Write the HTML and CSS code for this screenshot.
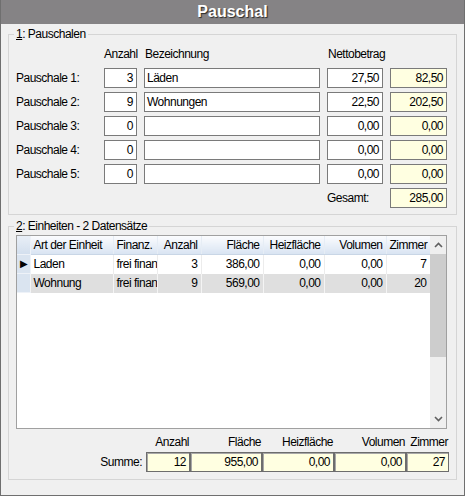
FILE: index.html
```html
<!DOCTYPE html>
<html lang="de">
<head>
    <meta charset="UTF-8">
    <meta name="viewport" content="width=device-width, initial-scale=1.0">
    <title>Pauschal</title>
    <link rel="stylesheet" href="styles.css">
</head>
<body>
    <div class="window">
        <div class="titlebar">Pauschal</div>

        <div class="window-body">
            <!-- Pauschalen -->
            <fieldset class="group group-flat">
                <legend><u>1</u>: Pauschalen</legend>
                <div class="flat-grid">
                    <div></div>
                    <div class="hdr right">Anzahl</div>
                    <div class="hdr">Bezeichnung</div>
                    <div class="hdr">Nettobetrag</div>
                    <div></div>

                    <div class="lbl">Pauschale 1:</div>
                    <div class="field num">3</div>
                    <div class="field">Läden</div>
                    <div class="field num">27,50</div>
                    <div class="field num calc">82,50</div>

                    <div class="lbl">Pauschale 2:</div>
                    <div class="field num">9</div>
                    <div class="field">Wohnungen</div>
                    <div class="field num">22,50</div>
                    <div class="field num calc">202,50</div>

                    <div class="lbl">Pauschale 3:</div>
                    <div class="field num">0</div>
                    <div class="field"></div>
                    <div class="field num">0,00</div>
                    <div class="field num calc">0,00</div>

                    <div class="lbl">Pauschale 4:</div>
                    <div class="field num">0</div>
                    <div class="field"></div>
                    <div class="field num">0,00</div>
                    <div class="field num calc">0,00</div>

                    <div class="lbl">Pauschale 5:</div>
                    <div class="field num">0</div>
                    <div class="field"></div>
                    <div class="field num">0,00</div>
                    <div class="field num calc">0,00</div>

                    <div></div>
                    <div></div>
                    <div></div>
                    <div class="lbl">Gesamt:</div>
                    <div class="field num calc">285,00</div>
                </div>
            </fieldset>

            <!-- Einheiten -->
            <fieldset class="group group-units">
                <legend><u>2</u>: Einheiten - 2 Datensätze</legend>
                <div class="grid-box">
                    <div class="grid-view">
                        <table class="units">
                            <colgroup>
                                <col style="width:13px">
                                <col style="width:83px">
                                <col style="width:44px">
                                <col style="width:44px">
                                <col style="width:62px">
                                <col style="width:61px">
                                <col style="width:62px">
                                <col style="width:44px">
                            </colgroup>
                            <thead>
                                <tr>
                                    <th class="ind"></th>
                                    <th>Art der Einheit</th>
                                    <th>Finanz.</th>
                                    <th class="right">Anzahl</th>
                                    <th class="right">Fläche</th>
                                    <th class="right">Heizfläche</th>
                                    <th class="right">Volumen</th>
                                    <th class="right">Zimmer</th>
                                </tr>
                            </thead>
                            <tbody>
                                <tr>
                                    <td class="ind"><span class="pointer">&#9654;</span></td>
                                    <td>Laden</td>
                                    <td>frei finanziert</td>
                                    <td class="right">3</td>
                                    <td class="right">386,00</td>
                                    <td class="right">0,00</td>
                                    <td class="right">0,00</td>
                                    <td class="right">7</td>
                                </tr>
                                <tr class="alt">
                                    <td class="ind"></td>
                                    <td>Wohnung</td>
                                    <td>frei finanziert</td>
                                    <td class="right">9</td>
                                    <td class="right">569,00</td>
                                    <td class="right">0,00</td>
                                    <td class="right">0,00</td>
                                    <td class="right">20</td>
                                </tr>
                            </tbody>
                        </table>
                    </div>
                    <div class="scrollbar">
                        <div class="sb-btn">
                            <svg width="9" height="6" viewBox="0 0 9 6"><polyline points="1,5 4.5,1.5 8,5" fill="none" stroke="#606060" stroke-width="1.6"/></svg>
                        </div>
                        <div class="sb-thumb"></div>
                        <div class="sb-track"></div>
                        <div class="sb-btn">
                            <svg width="9" height="6" viewBox="0 0 9 6"><polyline points="1,1 4.5,4.5 8,1" fill="none" stroke="#606060" stroke-width="1.6"/></svg>
                        </div>
                    </div>
                </div>

                <div class="sum-row">
                    <div></div>
                    <div class="sum-hdr">Anzahl</div>
                    <div class="sum-hdr">Fläche</div>
                    <div class="sum-hdr">Heizfläche</div>
                    <div class="sum-hdr">Volumen</div>
                    <div class="sum-hdr">Zimmer</div>

                    <div class="sum-lbl">Summe:</div>
                    <div class="field num calc sum">12</div>
                    <div class="field num calc sum">955,00</div>
                    <div class="field num calc sum">0,00</div>
                    <div class="field num calc sum">0,00</div>
                    <div class="field num calc sum">27</div>
                </div>
            </fieldset>
        </div>
    </div>
</body>
</html>
```

FILE: styles.css
```css
body {
    margin: 0;
    padding: 0;
    background: #f0f0f0;
    font-family: "Liberation Sans", Arial, sans-serif;
    font-size: 12px;
    letter-spacing: -0.5px;
    color: #000;
}
.window {
    width: 465px;
    height: 496px;
    box-sizing: border-box;
    border: 1px solid #6f6f6f;
    border-top: none;
    background: #f0f0f0;
    overflow: hidden;
}
.titlebar {
    height: 24px;
    line-height: 24px;
    background: #858385;
    color: #fff;
    font-size: 16px;
    font-weight: bold;
    letter-spacing: 0;
    text-align: center;
    text-shadow: 1px 1px 1px #2a2a2a;
}
.window-body {
    padding: 3px 7px 0 7px;
}
.group {
    margin: 0;
    padding: 6px 7px 6px 7px;
    border: 1px solid #d5d5d5;
    min-width: 0;
}
.group legend {
    padding: 0 2px;
    margin-left: -2px;
    line-height: 14px;
}
.group-units {
    margin-top: 4px;
    padding-top: 2px;
    padding-bottom: 7px;
}

/* Pauschalen */
.flat-grid {
    display: grid;
    grid-template-columns: 81px 33px 176px 56px 57px;
    grid-template-rows: 17px repeat(6, 20px);
    column-gap: 7px;
    row-gap: 4px;
}
.hdr {
    line-height: 14px;
    padding-left: 1px;
}
.hdr.right {
    text-align: right;
    padding: 0 1px 0 0;
}
.lbl {
    line-height: 20px;
    white-space: nowrap;
}
.field {
    box-sizing: border-box;
    height: 20px;
    line-height: 18px;
    border: 1px solid #7a7a7a;
    background: #fff;
    padding: 0 2px;
    white-space: nowrap;
    overflow: hidden;
}
.field.num {
    text-align: right;
    padding-right: 3px;
}
.field.calc {
    background: #ffffe1;
}

/* Einheiten grid */
.grid-box {
    display: flex;
    width: 431px;
    height: 194px;
    box-sizing: border-box;
    border: 1px solid #a0a0a0;
    background: #fff;
}
.grid-view {
    width: 413px;
    overflow: hidden;
}
.units {
    table-layout: fixed;
    border-collapse: collapse;
    width: 413px;
}
.units th,
.units td {
    height: 18px;
    padding: 0 3px;
    white-space: nowrap;
    overflow: hidden;
    text-overflow: clip;
    text-align: left;
    font-weight: normal;
}
.units th {
    background: linear-gradient(#fbfcfe, #d9e4f2);
    border-right: 1px solid #e6edf5;
    border-bottom: 1px solid #c9d6e6;
}
.units td {
    border-right: 1px solid #ececec;
}
.units .right {
    text-align: right;
}
.units .ind {
    padding: 0;
    background: #dae4f0;
    border-right: 1px solid #eef2f8;
    border-bottom: 1px solid #eef2f8;
}
.units th.ind {
    background: linear-gradient(#e9eff7, #d3dfee);
}
.units .pointer {
    display: block;
    font-size: 10px;
    line-height: 18px;
    text-align: center;
}
.units tr.alt td {
    background: #dfdfdf;
    border-right-color: #f4f4f4;
}
.units tr.alt td.ind {
    background: #dae4f0;
}
.scrollbar {
    width: 16px;
    display: flex;
    flex-direction: column;
    background: #efefef;
}
.sb-btn {
    height: 18px;
    display: flex;
    align-items: center;
    justify-content: center;
}
.sb-thumb {
    height: 103px;
    background: #cdcdcd;
}
.sb-track {
    flex: 1;
}

/* Summe */
.sum-row {
    display: grid;
    grid-template-columns: 130px 44px 72px 72px 72px 43px;
    grid-template-rows: 14px 20px;
    row-gap: 3px;
    margin-top: 6px;
}
.sum-hdr {
    line-height: 14px;
    text-align: right;
    padding-right: 1px;
    overflow: hidden;
    white-space: nowrap;
}
.sum-lbl {
    line-height: 20px;
    text-align: right;
    padding-right: 4px;
}
.field.sum {
    border-color: #6d6d6d;
    box-shadow: inset 1px 1px 0 #a8a8a8;
}
```
